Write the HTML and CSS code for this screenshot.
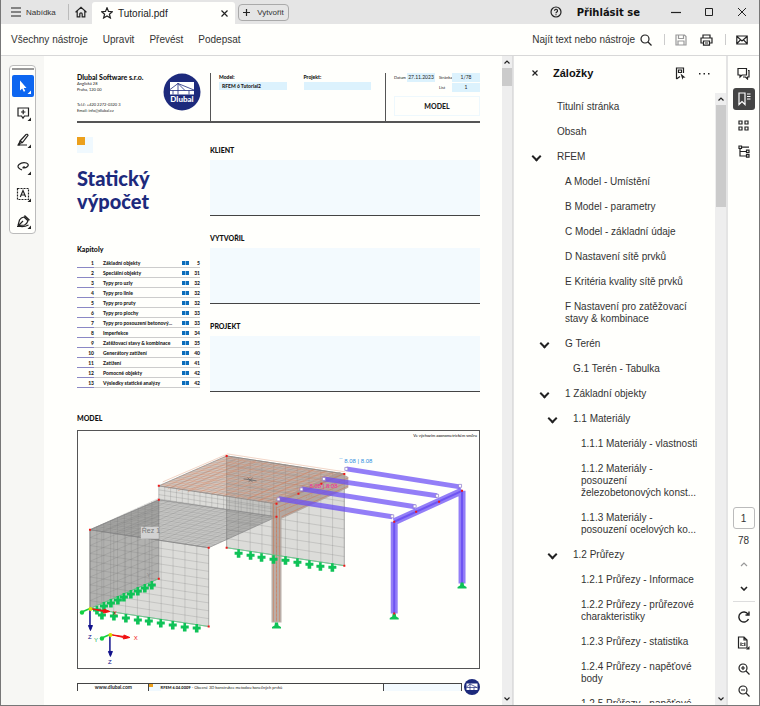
FILE: index.html
```html
<!DOCTYPE html>
<html lang="cs">
<head>
    <meta charset="UTF-8">
    <meta name="viewport" content="width=device-width, initial-scale=1.0">
    <title>Tutorial.pdf</title>
    <link rel="stylesheet" href="styles.css">
</head>
<body>
<div class="app">
    <header class="titlebar">
        <button class="menu-btn">
            <svg width="10" height="10" viewBox="0 0 10 10"><path d="M0 1h10M0 5h10M0 9h10"/></svg>
            Nabídka
        </button>
        <button class="home-btn" aria-label="Domů">
            <svg width="12" height="12" viewBox="0 0 12 12"><path d="M1 6.500V5.800L6 1.200l5 4.600v.7M2.200 5v5.800h2.600V8a1.200 1.200 0 0 1 2.400 0v2.800h2.600V5"/></svg>
        </button>
        <div class="tab">
            <svg width="12" height="12" viewBox="0 0 12 12"><path d="M6 .8l1.500 3.600 3.900.3-3 2.500 1 3.800L6 9l-3.400 2 1-3.800-3-2.500 3.900-.3z"/></svg>
            <span>Tutorial.pdf</span>
            <button class="tab-close" aria-label="Zavřít kartu">
                <svg width="7" height="7" viewBox="0 0 7 7"><path d="M.5 .5l6 6M6.500 .5l-6 6"/></svg>
            </button>
        </div>
        <button class="create-btn">
            <svg width="7" height="7" viewBox="0 0 7 7"><path d="M3.500 0v7M0 3.500h7"/></svg>
            Vytvořit
        </button>
        <div class="window-tools">
            <button aria-label="Nápověda">
                <svg width="12" height="12" viewBox="0 0 12 12"><circle cx="6" cy="6" r="5"/><path d="M4.500 4.800a1.500 1.500 0 1 1 2.200 1.300Q6 6.500 6 7.200M6 8.200v1"/></svg>
            </button>
            <button class="login">Přihlásit se</button>
            <button aria-label="Minimalizovat"><svg width="10" height="10" viewBox="0 0 10 10"><path d="M0 5.500h10"/></svg></button>
            <button aria-label="Maximalizovat"><svg class="thin" width="10" height="10" viewBox="0 0 10 10"><path d="M1.500 1.500h7v7h-7z"/></svg></button>
            <button aria-label="Zavřít"><svg class="thin" width="10" height="10" viewBox="0 0 10 10"><path d="M1 1l8 8M9 1L1 9"/></svg></button>
        </div>
    </header>

    <nav class="toolbar">
        <a href="#">Všechny nástroje</a>
        <a href="#">Upravit</a>
        <a href="#">Převést</a>
        <a href="#">Podepsat</a>
        <div class="toolbar-right">
            <button class="find-btn">
                Najít text nebo nástroje
                <svg width="12" height="12" viewBox="0 0 12 12"><circle cx="5" cy="5" r="4"/><path d="M8 8l3.500 3.500"/></svg>
            </button>
            <span class="sep"></span>
            <button class="muted" aria-label="Uložit">
                <svg width="12" height="12" viewBox="0 0 12 12"><path d="M1 1h8.500L11 2.500V11H1zM3.500 1v3.500h5V1M3 11V7h6v4"/></svg>
            </button>
            <button aria-label="Tisk">
                <svg width="13" height="12" viewBox="0 0 13 12"><path d="M3 4V1h7v3M3 9H1V4h11v5h-2M3.500 7h6v4.200h-6zM5 9h3"/></svg>
            </button>
            <span class="sep"></span>
            <button aria-label="E-mail">
                <svg width="12" height="10" viewBox="0 0 12 10"><path d="M.8 1h10.400v8H.8zM1 1.500L6 6l5-4.500M1 8.500l3.500-3.700M11 8.500L7.500 4.800"/></svg>
            </button>
        </div>
    </nav>

    <main class="workspace">
        <aside class="left-rail">
            <div class="tool-box">
                <span class="grip"></span>
                <button class="tool selected" aria-label="Vybrat">
                    <svg width="22" height="22" viewBox="0 0 22 22"><path class="solid" d="M8 5.500v10l2.200-2 1.600 3.300 1.500-.7-1.600-3.200H14.500z"/><path class="solid" d="M19 15.500V19h-3.500z"/></svg>
                </button>
                <button class="tool" aria-label="Komentář">
                    <svg width="22" height="22" viewBox="0 0 22 22"><path d="M6 6h10.500v8h-4L11 16.200 9.500 14H6zM11.200 7.800v4.400M9 10h4.400"/><path class="solid" d="M19 15.500V19h-3.500z"/></svg>
                </button>
                <button class="tool" aria-label="Zvýraznit">
                    <svg width="22" height="22" viewBox="0 0 22 22"><path d="M8 12l6-6.500q1.500-.8 2 .9L10.500 13.500zM8 12l-.8 2.500 3.300-1M6 16h9"/><path class="solid" d="M5 16.500l2-3 1.600 1.500-1 1.500zM19 15.500V19h-3.500z"/></svg>
                </button>
                <button class="tool" aria-label="Kreslit">
                    <svg width="22" height="22" viewBox="0 0 22 22"><path d="M8 13Q4.500 11 7 8.500q3-2.500 7.500-1.500 3 1.500 1 3.500-2 1.700-4.500 1.300 0-1.200 1.800-1M8 13l2 1"/><path class="solid" d="M19 15.500V19h-3.500z"/></svg>
                </button>
                <button class="tool" aria-label="Text">
                    <svg width="22" height="22" viewBox="0 0 22 22"><path stroke-dasharray="2 1" d="M5.500 5.500h11v11h-11z"/><path d="M8.300 14L11 7.500l2.700 6.500M9.300 12h3.400"/><path class="solid" d="M19 15.500V19h-3.500z"/></svg>
                </button>
                <button class="tool" aria-label="Podpis">
                    <svg width="22" height="22" viewBox="0 0 22 22"><path d="M6 15.500l1.500-5.500Q9 7.500 12 7l4 3.800q-1 3.200-3.500 4.200L6.500 15.500l4.500-4.500M12.500 5.500l5 4.800M5 16.500h3.500q4 .5 8-1.500"/><path class="solid" d="M19 15.500V19h-3.500z"/></svg>
                </button>
            </div>
        </aside>

        <section class="viewer">
            <article class="page">
                <div class="page-head">
                    <div class="company">
                        <div>
                            <h2>Dlubal Software s.r.o.</h2>
                            <p>Anglická 28<br>Praha, 120 00</p>
                            <p class="contact">Tel.č: +420 2272-0320 3<br>Email: info@dlubal.cz</p>
                        </div>
                        <svg class="logo" viewBox="0 0 38 38">
                            <circle cx="19" cy="19" r="18.500" fill="#1d2a7c"/>
                            <path fill="#fff" d="M7 9h24v12.500H7z"/>
                            <path stroke="#1d2a7c" stroke-width=".8" fill="none" d="M7 17.500h24M7 16.500L15 10.500 31 17M15 10v11.500M15 10.500l7 7M10 17.500v4M26 17.500v4"/>
                            <text class="logo-text" x="19" y="29" text-anchor="middle">Dlubal</text>
                        </svg>
                    </div>
                    <div class="meta">
                        <div><h3>Model:</h3><p>RFEM 6 Tutorial2</p></div>
                        <div><h3>Projekt:</h3><p></p></div>
                    </div>
                    <div class="sheet">
                        <div class="sheet-row"><span>Datum</span><b class="date">27.11.2023</b><span class="second">Stránka</span><b>1/78</b></div>
                        <div class="sheet-row"><span class="second">List</span><b>1</b></div>
                        <div class="sheet-title">MODEL</div>
                    </div>
                </div>

                <div class="page-body">
                    <div class="intro">
                        <span class="mark"></span>
                        <h1>Statický<br>výpočet</h1>
                        <h3>Kapitoly</h3>
                        <table class="chapters">
                            <tr><td>1</td><td>Základní objekty</td><td><i></i></td><td>5</td></tr>
                            <tr><td>2</td><td>Speciální objekty</td><td><i></i></td><td>31</td></tr>
                            <tr><td>3</td><td>Typy pro uzly</td><td><i></i></td><td>32</td></tr>
                            <tr><td>4</td><td>Typy pro linie</td><td><i></i></td><td>32</td></tr>
                            <tr><td>5</td><td>Typy pro pruty</td><td><i></i></td><td>32</td></tr>
                            <tr><td>6</td><td>Typy pro plochy</td><td><i></i></td><td>33</td></tr>
                            <tr><td>7</td><td>Typy pro posouzení betonový...</td><td><i></i></td><td>33</td></tr>
                            <tr><td>8</td><td>Imperfekce</td><td><i></i></td><td>34</td></tr>
                            <tr><td>9</td><td>Zatěžovací stavy &amp; kombinace</td><td><i></i></td><td>35</td></tr>
                            <tr><td>10</td><td>Generátory zatížení</td><td><i></i></td><td>40</td></tr>
                            <tr><td>11</td><td>Zatížení</td><td><i></i></td><td>41</td></tr>
                            <tr><td>12</td><td>Pomocné objekty</td><td><i></i></td><td>42</td></tr>
                            <tr><td>13</td><td>Výsledky statické analýzy</td><td><i></i></td><td>42</td></tr>
                        </table>
                    </div>
                    <div class="fields">
                        <h3>KLIENT</h3><div class="field"></div>
                        <h3>VYTVOŘIL</h3><div class="field"></div>
                        <h3>PROJEKT</h3><div class="field"></div>
                    </div>
                </div>

                <h3 class="model-title">MODEL</h3>
                <figure class="model">
                    <svg viewBox="0 0 402 238">
                        <defs>
                            <path id="grid" vector-effect="non-scaling-stroke" d="M0 0h10M0 1h10M0 2h10M0 3h10M0 4h10M0 5h10M0 6h10M0 7h10M0 8h10M0 9h10M0 10h10M0 0v10M1 0v10M2 0v10M3 0v10M4 0v10M5 0v10M6 0v10M7 0v10M8 0v10M9 0v10M10 0v10"/>
                            <path id="half" vector-effect="non-scaling-stroke" d="M0 .5h10M0 1.500h10M0 2.500h10M0 3.500h10M0 4.500h10M0 5.500h10M0 6.500h10M0 7.500h10M0 8.500h10M0 9.500h10M.5 0v10M1.500 0v10M2.500 0v10M3.500 0v10M4.500 0v10M5.500 0v10M6.500 0v10M7.500 0v10M8.500 0v10M9.500 0v10"/>
                            <path id="strip" vector-effect="non-scaling-stroke" d="M0 3h10M0 6.500h10M.5 0v10M1 0v10M1.500 0v10M2 0v10M2.500 0v10M3 0v10M3.500 0v10M4 0v10M4.500 0v10M5 0v10M5.500 0v10M6 0v10M6.500 0v10M7 0v10M7.500 0v10M8 0v10M8.500 0v10M9 0v10M9.500 0v10"/>
                            <path id="sup" d="M-1.300-4.500h2.600v2.500H4v3H1.800V4h-3.600V1H-4v-3h2.700z"/>
                            <path id="foot" d="M-1.500-3h3L2 0l2.500 1.500V3h-9V1.500L-2 0z"/>
                        </defs>

                        <!-- walls and slabs -->
                        <g class="face">
                            <path d="M149 25l118 18v92l-118-18z"/>
                            <path d="M12 99l119 18v79L12 178z"/>
                            <path class="dark" d="M12 99l69-30v79l-69 30z"/>
                            <path d="M81 55l118 18v13L81 69z"/>
                            <path class="dark" d="M12 99l69-30 118 17-68 31z"/>
                            <path d="M81 55l68-30 118 18-68 30z"/>
                        </g>
                        <g class="mesh">
                            <use href="#grid" transform="matrix(11.8 1.800 0 9.200 149 25)"/>
                            <use href="#grid" transform="matrix(11.900 1.800 0 7.900 12 99)"/>
                            <use href="#grid" transform="matrix(6.900 -3 0 7.900 12 99)"/>
                            <use href="#grid" transform="matrix(11.900 1.800 6.800 -3.100 12 99)"/>
                            <use href="#strip" transform="matrix(11.800 1.800 0 1.350 81 55)"/>
                            <use href="#grid" transform="matrix(11.800 1.800 6.800 -3 81 55)"/>
                        </g>
                        <g class="mesh light">
                            <use href="#half" transform="matrix(11.900 1.800 6.800 -3.100 12 99)"/>
                        </g>

                        <!-- reinforced roof, beam and column -->
                        <path fill="#c08870" fill-opacity=".25" d="M81 55l68-30 118 18-68 30z"/>
                        <g class="rebar">
                            <use href="#half" transform="matrix(11.800 1.800 6.800 -3 81 55)"/>
                            <path d="M85 51l65-28 118 18M90 58l68-29M100 60l68-30M110 61l68-30M190 71l68-30M180 70l68-30M170 68l68-30"/>
                        </g>
                        <path fill="#a99a92" fill-opacity=".8" d="M194 72l68-31 9 5v11l-67 31v104h-10z"/>
                        <path class="bars" d="M196 73v118M199 76v115M202 78v113M196 73l70-30M199 77l72-30M202 81l69-30M204 86l67-31"/>
                        <path class="bars" stroke-dasharray="1 3" stroke-width="8" d="M199 88v103"/>
                        <path class="bars" stroke-dasharray="1 5" stroke-width="9" d="M201 79l68-30"/>
                        <path stroke="#666" fill="none" stroke-width=".8" d="M166 48l13 2M171 51l4-4M170 47l5 4"/>

                        <!-- steel frame -->
                        <g class="steel">
                            <path d="M269 38l114 18M246 48l114 17M224 58l114 18M201 68l114 18"/>
                            <path class="wide" d="M317 91l68-31M317 91v92M385 60v93"/>
                            <path class="core" d="M317 91l68-31M317 91v92M385 60v93"/>
                        </g>
                        <g fill="#fff" stroke="#8a78c8" stroke-width=".7">
                            <path d="M267.500 36.500h3v3h-3zM245 46.500h3v3h-3zM222.500 57h3v3h-3zM199.500 67h3v3h-3zM381.500 53.500h3v3h-3zM358.500 63.500h3v3h-3zM336 74h3v3h-3zM313.500 84h3v3h-3z"/>
                        </g>

                        <!-- line supports -->
                        <path stroke="#5fd08a" fill="none" stroke-width=".8" d="M12 178l119 18M149 117l118 18M12 178l69-30"/>
                        <g fill="#0fc257">
                            <use href="#sup" x="19" y="180"/><use href="#sup" x="26" y="176"/><use href="#sup" x="33" y="173"/>
                            <use href="#sup" x="40" y="170"/><use href="#sup" x="46" y="167"/><use href="#sup" x="53" y="164"/>
                            <use href="#sup" x="60" y="161"/><use href="#sup" x="67" y="158"/><use href="#sup" x="74" y="155"/>
                            <use href="#sup" x="24" y="185"/><use href="#sup" x="36" y="186"/><use href="#sup" x="48" y="188"/>
                            <use href="#sup" x="60" y="190"/><use href="#sup" x="71" y="191"/><use href="#sup" x="83" y="193"/>
                            <use href="#sup" x="95" y="195"/><use href="#sup" x="107" y="197"/><use href="#sup" x="119" y="198"/>
                            <use href="#sup" x="161" y="123"/><use href="#sup" x="173" y="125"/><use href="#sup" x="184" y="127"/>
                            <use href="#sup" x="196" y="129"/><use href="#sup" x="208" y="130"/><use href="#sup" x="220" y="132"/>
                            <use href="#sup" x="232" y="134"/><use href="#sup" x="243" y="136"/><use href="#sup" x="255" y="137"/>
                            <use href="#foot" x="199" y="195"/><use href="#foot" x="317" y="186"/><use href="#foot" x="385" y="155"/>
                        </g>

                        <!-- nodes -->
                        <path fill="#f01818" d="M11 98h2v2h-2zM80 54h2v2h-2zM80 68h2v2h-2zM80 147h2v2h-2zM130 116h2v2h-2zM130 195h2v2h-2zM148 24h2v2h-2zM148 116h2v2h-2zM198 72h2v2h-2zM198 85h2v2h-2zM266 42h2v2h-2zM266 134h2v2h-2zM220 62h2v2h-2zM243 52h2v2h-2zM316 90h2v2h-2zM384 59h2v2h-2zM338 80h2v2h-2zM361 70h2v2h-2zM316 182h2v2h-2z"/>

                        <path fill="#d2d2d2" d="M63 96h18v12H63z"/>
                        <text class="cut" x="64" y="102">Řez 1</text>
                        <text class="load-pink" x="232" y="57">8.08 | 8.08</text>
                        <text class="load-blue" x="262" y="32">¯ 8.08 | 8.08</text>
                        <text class="note" x="400" y="6" text-anchor="end">Ve výchozím axonometrickém směru</text>

                        <!-- axes -->
                        <g id="axes">
                            <path stroke="#f01010" fill="#f01010" d="M12 178l14 2v-1.500l6 2.500-6.500 1.500V181z"/>
                            <path stroke="#10108a" fill="#10108a" d="M12 178v17h-1.500l2 5 2-5H12z"/>
                            <path stroke="#12d040" stroke-width="1.500" d="M12 178l-7 3"/>
                            <circle cx="4" cy="182" r="2.200" fill="#12d040"/>
                            <circle cx="12.500" cy="178.500" r="2" fill="#d8e000"/>
                        </g>
                        <use href="#axes" x="20" y="26"/>
                        <text class="axis x" x="35" y="184">X</text>
                        <text class="axis x" x="56" y="210">X</text>
                        <text class="axis y" x="16" y="212">Y</text>
                        <text class="axis z" x="10" y="209">Z</text>
                        <text class="axis z" x="30" y="234">Z</text>
                        <text class="axis faded" x="69" y="146">Y</text>
                    </svg>
                </figure>

                <div class="page-foot">
                    <div class="foot-box">
                        <b class="site">www.dlubal.com</b>
                        <span class="mark small"></span>
                        <span class="product"><b>RFEM 6.04.0009</b> - Obecné 3D konstrukce metodou konečných prvků</span>
                        <span class="blank"></span>
                    </div>
                    <svg class="foot-logo" viewBox="0 0 16 16"><circle cx="8" cy="8" r="8" fill="#1d2a7c"/><path fill="#fff" d="M2.500 4.500h11v6.500h-11z"/><path stroke="#1d2a7c" stroke-width=".7" fill="none" d="M2.500 8.500h11M6 4.500v6.500M10 8.500v3M2.500 8L6 5l7 3.500"/></svg>
                </div>
            </article>
        </section>
        <div class="scrollbar doc-scroll">
            <svg width="6" height="4" viewBox="0 0 6 4"><path d="M.5 3.500L3 1l2.500 2.500"/></svg>
            <span class="thumb"></span>
            <svg class="down" width="6" height="4" viewBox="0 0 6 4"><path d="M.5 .5L3 3 5.500 .5"/></svg>
        </div>

        <aside class="bookmarks">
            <div class="bm-head">
                <button aria-label="Zavřít panel"><svg width="6" height="6" viewBox="0 0 6 6"><path d="M.5 .5l5 5M5.500 .5l-5 5"/></svg></button>
                <h2>Záložky</h2>
                <button aria-label="Najít záložku"><svg width="11" height="13" viewBox="0 0 11 13"><path d="M1.500 12V1h7v5M1.500 12L5 9.500M3.500 3h3v2.500h-3z"/><path class="solid" d="M5.500 6.500l5 4-2.300.3-.7 2z"/></svg></button>
                <button aria-label="Možnosti"><svg width="11" height="3" viewBox="0 0 11 3"><path class="solid" d="M0 1h1.500v1.500H0zM4.500 1H6v1.500H4.500zM9 1h1.500v1.500H9z"/></svg></button>
            </div>
            <div class="bm-body">
                <ul class="tree">
                    <li><a href="#">Titulní stránka</a></li>
                    <li><a href="#">Obsah</a></li>
                    <li class="open"><a href="#">RFEM</a>
                        <ul>
                            <li><a href="#">A Model - Umístění</a></li>
                            <li><a href="#">B Model - parametry</a></li>
                            <li><a href="#">C Model - základní údaje</a></li>
                            <li><a href="#">D Nastavení sítě prvků</a></li>
                            <li><a href="#">E Kritéria kvality sítě prvků</a></li>
                            <li><a href="#">F Nastavení pro zatěžovací stavy &amp; kombinace</a></li>
                            <li class="open"><a href="#">G Terén</a>
                                <ul><li><a href="#">G.1 Terén - Tabulka</a></li></ul>
                            </li>
                            <li class="open"><a href="#">1 Základní objekty</a>
                                <ul>
                                    <li class="open"><a href="#">1.1 Materiály</a>
                                        <ul>
                                            <li><a href="#">1.1.1 Materiály - vlastnosti</a></li>
                                            <li><a href="#">1.1.2 Materiály -<br>posouzení<br>železobetonových konst...</a></li>
                                            <li><a href="#">1.1.3 Materiály -<br>posouzení ocelových ko...</a></li>
                                        </ul>
                                    </li>
                                    <li class="open"><a href="#">1.2 Průřezy</a>
                                        <ul>
                                            <li><a href="#">1.2.1 Průřezy - Informace</a></li>
                                            <li><a href="#">1.2.2 Průřezy - průřezové charakteristiky</a></li>
                                            <li><a href="#">1.2.3 Průřezy - statistika</a></li>
                                            <li><a href="#">1.2.4 Průřezy - napěťové body</a></li>
                                            <li><a href="#">1.2.5 Průřezy - napěťové</a></li>
                                        </ul>
                                    </li>
                                </ul>
                            </li>
                        </ul>
                    </li>
                </ul>
                <div class="scrollbar">
                    <svg width="6" height="4" viewBox="0 0 6 4"><path d="M.5 3.500L3 1l2.500 2.500"/></svg>
                    <span class="thumb long"></span>
                    <svg class="down" width="6" height="4" viewBox="0 0 6 4"><path d="M.5 .5L3 3 5.500 .5"/></svg>
                </div>
            </div>
        </aside>

        <aside class="right-rail">
            <button aria-label="Komentáře"><svg width="13" height="13" viewBox="0 0 13 13"><path d="M1 1.500h8.500v6.500H5L3 10V8H1zM11 3.500h1v6.500h-1.500v2L8.500 10H6"/></svg></button>
            <button class="active" aria-label="Záložky"><svg width="14" height="14" viewBox="0 0 14 14"><path d="M2 1h6v11.500L5 9.500l-3 3zM10 2h3.500M10 4.500h3.500M10 7h3.500"/></svg></button>
            <button aria-label="Miniatury"><svg width="11" height="11" viewBox="0 0 11 11"><path d="M1 1h3v3H1zM7 1h3v3H7zM1 7h3v3H1zM7 7h3v3H7z"/></svg></button>
            <button aria-label="Vrstvy"><svg width="12" height="13" viewBox="0 0 12 13"><path d="M1 1h2.500v2.500H1zM2 3.500V11h6M3.500 2.200H11M2 6.500h6M8.500 5.200H11v2.500H8.500zM8.500 9.700H11v2.500H8.500z"/></svg></button>
            <input class="page-no" type="text" value="1" aria-label="Stránka">
            <span class="page-count">78</span>
            <button class="nav-btn muted" aria-label="Předchozí"><svg width="8" height="5" viewBox="0 0 8 5"><path d="M1 4l3-3 3 3"/></svg></button>
            <button class="nav-btn" aria-label="Další"><svg width="8" height="5" viewBox="0 0 8 5"><path stroke-width="1.600" d="M1 1l3 3 3-3"/></svg></button>
            <hr>
            <button aria-label="Otočit"><svg width="12" height="12" viewBox="0 0 12 12"><path stroke-width="1.400" d="M10.500 8A5 5 0 1 1 10 3.200M11 .5V4H7.500"/></svg></button>
            <button aria-label="Skutečná velikost"><svg width="13" height="14" viewBox="0 0 13 14"><path d="M1.500 1H7l3 3v8H1.500zM7 1v3h3M4 6.500v3.500M7.800 6.500v3.500M5.900 7v1M5.900 9v1"/><path class="solid" d="M12.500 10v3.500H9z"/></svg></button>
            <button aria-label="Přiblížit"><svg width="12" height="12" viewBox="0 0 12 12"><circle cx="5" cy="5" r="4"/><path d="M8 8l3.500 3.500M3 5h4M5 3v4"/></svg></button>
            <button class="last" aria-label="Oddálit"><svg width="12" height="12" viewBox="0 0 12 12"><circle cx="5" cy="5" r="4"/><path d="M8 8l3.500 3.500M3 5h4"/></svg></button>
        </aside>
    </main>
</div>
</body>
</html>
```
FILE: styles.css
```css
* {
    box-sizing: border-box;
}

body {
    margin: 0;
    font-family: "Liberation Sans", Arial, sans-serif;
    font-size: 10px;
    color: #333;
    background-color: #fffffc;
}

h1, h2, h3, p, ul, figure {
    margin: 0;
    padding: 0;
}

button {
    display: flex;
    align-items: center;
    justify-content: center;
    padding: 0;
    border: none;
    background: none;
    font: inherit;
    color: inherit;
    cursor: pointer;
}

a {
    color: inherit;
    text-decoration: none;
}

button svg, .tab svg, .scrollbar svg {
    flex: none;
    fill: none;
    stroke: #222;
    stroke-width: 1.2;
}

svg .solid {
    fill: #222;
    stroke: none;
}

svg.thin {
    stroke-width: 1;
}

.app {
    display: flex;
    flex-direction: column;
    height: 100vh;
    border: 1px solid #777;
    border-top: none;
}

/* title bar */
.titlebar {
    display: flex;
    align-items: center;
    flex: none;
    height: 24px;
    padding-left: 10px;
    background-color: #e5e5e5;
}

.menu-btn {
    gap: 5px;
    width: 58px;
    height: 16px;
    justify-content: flex-start;
    border-right: 1px solid #bbb;
    font-size: 8px;
}

.home-btn {
    width: 23px;
}

.tab {
    display: flex;
    align-items: center;
    align-self: flex-end;
    gap: 5px;
    width: 143px;
    height: 22px;
    padding: 0 7px 0 9px;
    border-radius: 3px 3px 0 0;
    background-color: #fffffc;
    color: #222;
}

.tab-close {
    margin-left: auto;
}

.create-btn {
    gap: 7px;
    width: 51px;
    height: 17px;
    margin-left: 3px;
    border: 1px solid #aaa;
    border-radius: 4px;
    font-size: 8px;
}

.window-tools {
    display: flex;
    align-items: center;
    gap: 23px;
    margin-left: auto;
    padding-right: 12px;
}

.login {
    margin: 0 8px 0 -8px;
    font-family: "DejaVu Sans", sans-serif;
    font-size: 10px;
    font-weight: bold;
    color: #111;
}

/* tools menu */
.toolbar {
    display: flex;
    align-items: center;
    flex: none;
    gap: 15px;
    height: 32px;
    padding: 0 11px 0 10px;
    border-bottom: 1px solid #d8d8d8;
}

.toolbar-right {
    display: flex;
    align-items: center;
    gap: 13px;
    margin-left: auto;
}

.find-btn {
    gap: 5px;
}

.sep {
    width: 1px;
    height: 11px;
    margin: 0 -3px 0 -1px;
    background-color: #ccc;
}

.muted svg {
    stroke: #999;
}

/* workspace */
.workspace {
    display: flex;
    flex: 1;
    min-height: 0;
}

.left-rail {
    flex: none;
    width: 43px;
    padding: 9px 8px;
    background-color: #f7f7f4;
}

.tool-box {
    display: flex;
    flex-direction: column;
    align-items: center;
    gap: 5px;
    padding: 2px 0 1px;
    border: 1px solid #bbb;
    border-radius: 4px;
    background-color: #fffffc;
}

.grip {
    width: 22px;
    height: 2px;
    background-color: #999;
}

.tool {
    width: 22px;
    height: 22px;
    border-radius: 2px;
}

.tool.selected {
    background-color: #0d66f0;
}

.tool.selected .solid {
    fill: #fff;
}

.viewer {
    flex: 1;
    min-width: 0;
    overflow: hidden;
}

.scrollbar {
    display: flex;
    flex-direction: column;
    align-items: center;
    flex: none;
    width: 11px;
    padding: 4px 0;
    background-color: #eee;
}

.doc-scroll {
    border-right: 1px solid #ddd;
}

.thumb {
    width: 10px;
    height: 18px;
    margin-top: 4px;
    background-color: #cbcbcb;
}

.thumb.long {
    height: 102px;
}

.scrollbar .down {
    margin-top: auto;
}

/* report page */
.page {
    padding: 17px 22px 0 33px;
    font-family: Lato, "Liberation Sans", sans-serif;
    font-size: 5px;
    line-height: 6px;
    color: #222;
}

.page h2, .page h3 {
    font-size: 7px;
    font-weight: 900;
    line-height: 8px;
    color: #111;
}

.page-head {
    display: grid;
    grid-template-columns: 133fr 176fr 94fr;
    height: 50px;
    border-bottom: 2px solid #555;
}

.company {
    display: flex;
    justify-content: space-between;
    padding-right: 9px;
    font-size: 4px;
    white-space: nowrap;
}

.contact {
    margin-top: 9px;
}

.logo {
    flex: none;
    width: 38px;
    height: 38px;
    margin-left: -20px;
}

.logo-text {
    font-size: 8px;
    font-weight: 900;
    fill: #fff;
}

.meta {
    display: grid;
    grid-template-columns: 1fr 1fr;
    gap: 17px;
    padding: 0 14px 0 8px;
    border: solid #555;
    border-width: 0 1px;
}

.page .meta h3 {
    font-size: 5px;
}

.meta p {
    height: 8px;
    margin-top: 1px;
    padding-left: 3px;
    background-color: #dcf2fd;
    font-weight: 900;
    line-height: 8px;
}

.sheet {
    padding-left: 8px;
}

.sheet-row {
    display: flex;
    align-items: center;
    justify-content: flex-end;
    height: 9px;
    margin-bottom: 1px;
}

.sheet-row b {
    width: 28px;
    height: 9px;
    background-color: #dcf2fd;
    font-weight: normal;
    line-height: 9px;
    text-align: center;
}

.sheet-row span {
    flex: 1;
    font-size: 4px;
}

.sheet-row .second {
    flex: none;
    width: 13px;
}

.sheet-row .date {
    margin-right: 4px;
}

.sheet-title {
    height: 20px;
    margin-top: 4px;
    border: 1px solid #eef8fd;
    font-size: 7px;
    font-weight: 900;
    line-height: 18px;
    text-align: center;
}

.page-body {
    display: grid;
    grid-template-columns: 133fr 270fr;
}

.intro {
    padding: 14px 10px 0 0;
}

.mark {
    display: block;
    width: 16px;
    height: 16px;
    border: solid #f0f9fe;
    border-width: 0 8px 8px 0;
    background-color: #eca01c;
}

.intro h1 {
    margin: 14px 0 32px;
    font-size: 20px;
    font-weight: 900;
    line-height: 23px;
    color: #1d2a7c;
}

.chapters {
    width: 100%;
    margin-top: 5px;
    border-collapse: separate;
    border-spacing: 0;
    table-layout: fixed;
    font-weight: 900;
}

.chapters td {
    height: 10px;
    padding: 0;
    border-bottom: 1px solid #ccc;
    white-space: nowrap;
}

.chapters td:first-child {
    width: 17px;
    border-color: #8a87c4;
    text-align: right;
}

.chapters td:nth-child(2) {
    padding-left: 9px;
}

.chapters td:nth-child(3) {
    width: 8px;
}

.chapters td:last-child {
    width: 10px;
    text-align: right;
}

.chapters i {
    display: block;
    width: 7px;
    height: 4px;
    background: linear-gradient(90deg, #0a6cba 3px, #7fb6e0 3px, #7fb6e0 4px, #0a6cba 4px);
}

.fields h3 {
    margin-top: 22px;
}

.fields h3:first-child {
    margin-top: 23px;
}

.field {
    height: 56px;
    margin-top: 6px;
    margin-bottom: -4px;
    border-bottom: 1px solid #444;
    background-color: #f3fafe;
}

.page h3.model-title {
    margin-top: 26px;
}

.model {
    margin-top: 8px;
    border: 1px solid #555;
}

.model svg {
    display: block;
    width: 100%;
}

.face {
    fill: #8c8c88;
    fill-opacity: .3;
    stroke: #999;
    stroke-width: .6;
}

.face .dark {
    fill: #707070;
    fill-opacity: .4;
}

.mesh {
    fill: none;
    stroke: #777;
    stroke-opacity: .4;
    stroke-width: .6;
}

.mesh.light {
    stroke-opacity: .2;
}

.rebar {
    fill: none;
    stroke: #d2714a;
    stroke-opacity: .5;
    stroke-width: .6;
}

.bars {
    fill: none;
    stroke: #d8693c;
    stroke-opacity: .6;
    stroke-width: .7;
}

.steel {
    fill: none;
    stroke: #6a4cf5;
    stroke-opacity: .72;
    stroke-width: 5;
}

.steel .wide {
    stroke-width: 7;
}

.steel .core {
    stroke: #5638ee;
    stroke-opacity: .6;
    stroke-width: 2;
}

.cut {
    font: 7px "Liberation Sans", sans-serif;
    fill: #777;
}

.load-pink, .load-blue {
    font: 6px "Liberation Sans", sans-serif;
    fill: #f52aa0;
}

.load-blue {
    fill: #2f8fe0;
}

.note {
    font-size: 4px;
}

.axis {
    font: 6px "Liberation Sans", sans-serif;
}

.axis.x {
    fill: #f01010;
}

.axis.y {
    fill: #12b060;
}

.axis.z {
    fill: #10108a;
}

.axis.faded {
    fill: #888;
}

.page-foot {
    display: flex;
    align-items: center;
    gap: 2px;
    margin-top: 10px;
}

.foot-box {
    display: grid;
    grid-template-columns: 71fr 12fr 224fr 78fr;
    flex: 1;
    height: 8px;
    border: solid #444;
    border-width: 1px 1px 0;
    font-size: 4px;
    line-height: 7px;
    white-space: nowrap;
}

.site {
    font-size: 5px;
    text-align: center;
}

.product b {
    font-weight: 900;
}

.mark.small {
    width: auto;
    height: 7px;
    border-width: 0 8px 4px 0;
    box-shadow: -1px 0 #444;
}

.blank {
    border-left: 1px solid #444;
    background-color: #f3fafe;
}

.foot-logo {
    width: 16px;
    height: 16px;
}

/* bookmarks panel */
.bookmarks {
    display: flex;
    flex-direction: column;
    flex: none;
    width: 215px;
    border: solid #e4e4e4;
    border-width: 0 2px 0 1px;
}

.bm-head {
    display: flex;
    align-items: center;
    flex: none;
    height: 37px;
    padding: 0 16px 3px 18px;
    gap: 13px;
}

.bm-head h2 {
    flex: 1;
    margin-left: 2px;
    font-size: 11px;
    color: #111;
}

.bm-body {
    display: flex;
    flex: 1;
    min-height: 0;
}

.tree {
    flex: 1;
    min-width: 0;
    margin-bottom: 2px;
    padding: 1px 8px 0 43px;
    overflow: hidden;
    list-style: none;
    line-height: 12px;
}

.tree ul {
    padding-left: 8px;
    list-style: none;
}

.tree li {
    position: relative;
}

.tree a {
    display: block;
    padding: 7px 0 6px;
}

.tree .open::before {
    content: "";
    position: absolute;
    left: -24px;
    top: 9px;
    width: 5px;
    height: 5px;
    border: solid #222;
    border-width: 0 2px 2px 0;
    transform: rotate(45deg);
}

/* right rail */
.right-rail {
    display: flex;
    flex-direction: column;
    align-items: center;
    gap: 4px;
    flex: none;
    width: 31px;
    padding: 6px 0 3px;
}

.right-rail button {
    width: 22px;
    height: 22px;
    border-radius: 3px;
}

.right-rail .active {
    background-color: #444;
}

.right-rail .active svg {
    stroke: #fff;
}

.page-no {
    width: 22px;
    height: 22px;
    margin-top: auto;
    padding: 0;
    border: 1px solid #bbb;
    border-radius: 3px;
    background: none;
    font: inherit;
    color: #333;
    text-align: center;
}

.page-count {
    line-height: 16px;
}

.right-rail .nav-btn {
    height: 18px;
    margin-top: 2px;
}

.right-rail hr {
    width: 22px;
    height: 1px;
    margin: 0;
    border: none;
    background-color: #ddd;
}

.right-rail .last {
    margin-top: -4px;
}
```
